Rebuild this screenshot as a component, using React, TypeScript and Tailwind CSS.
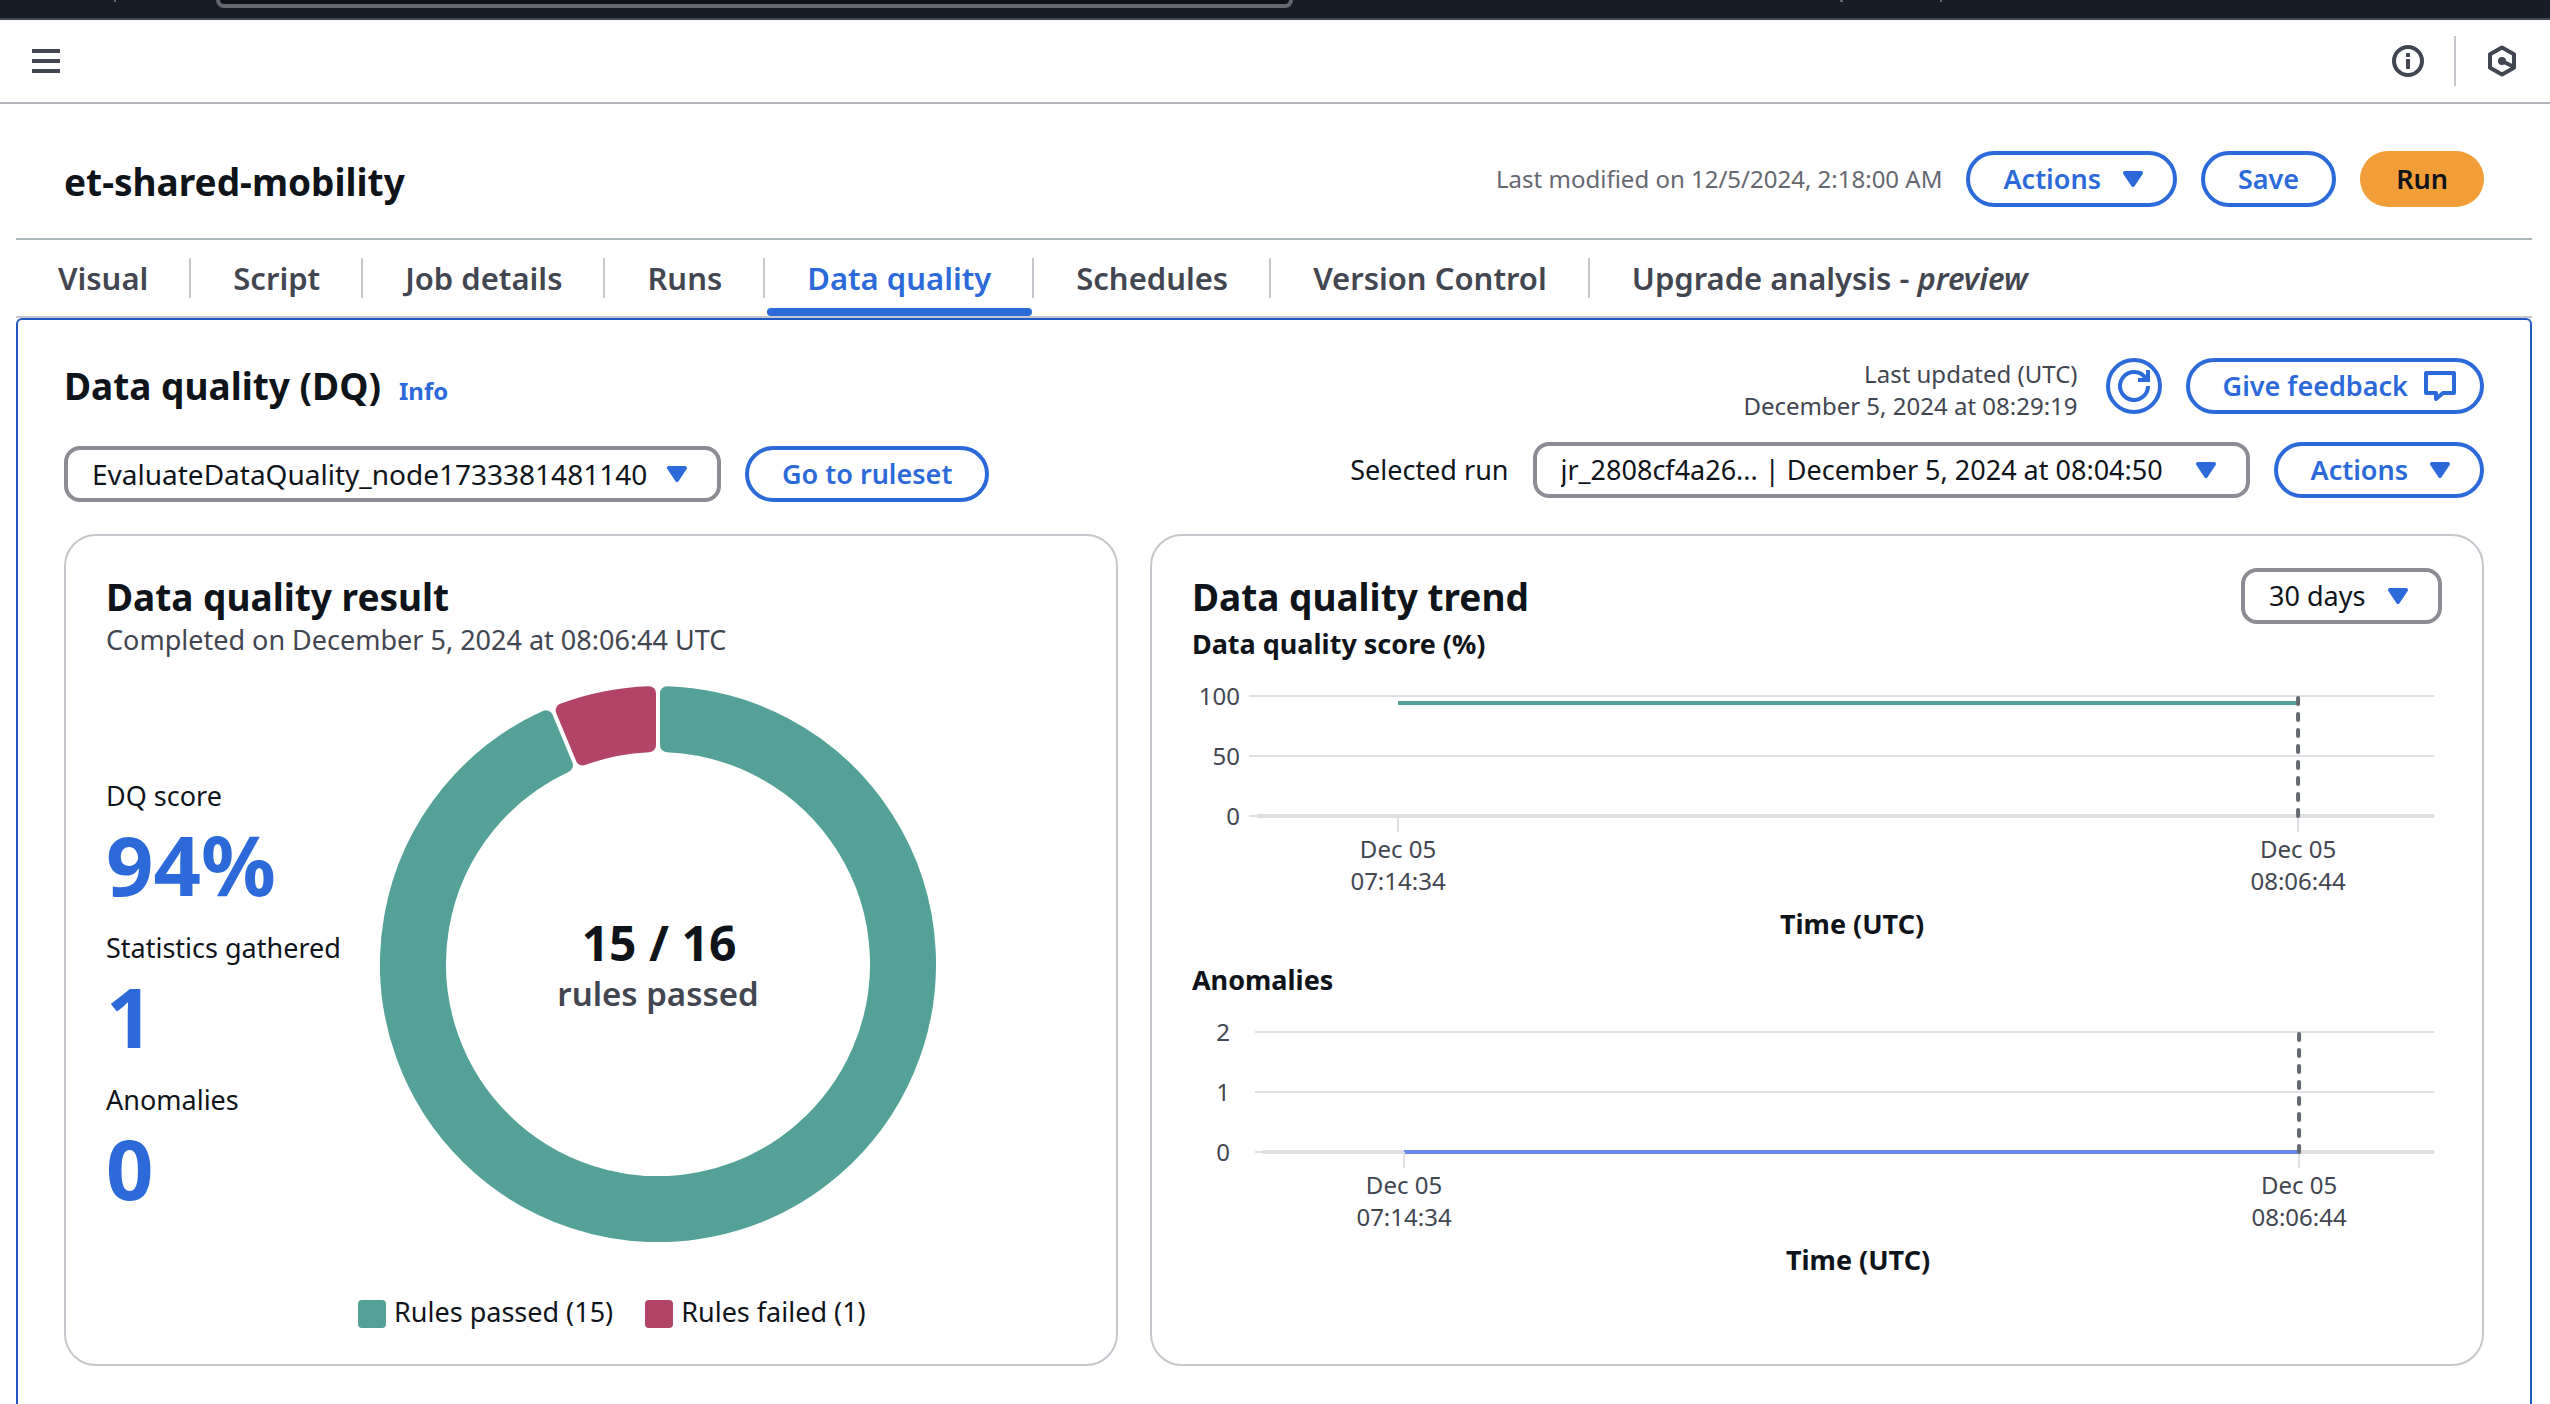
import React from "react";

const TEAL = "#54a297";
const RED = "#b14467";

function Triangle({ className = "" }: { className?: string }) {
  return (
    <svg aria-hidden="true" viewBox="0 0 20 16" className={`h-4 w-5 shrink-0 ${className}`}>
      <path d="M2 2h16l-8 12z" fill="#2c6ad9" stroke="#2c6ad9" strokeWidth="4" strokeLinejoin="round" />
    </svg>
  );
}

function PillButton({ children, className = "" }: { children: React.ReactNode; className?: string }) {
  return (
    <button
      type="button"
      className={`flex h-14 shrink-0 items-center justify-center whitespace-nowrap rounded-full border-4 border-[#2c6ad9] pl-[33px] text-[27px] font-semibold text-[#2c6ad9] ${className}`}
    >
      {children}
    </button>
  );
}

function ActionsButton() {
  return (
    <PillButton className="gap-[22px] pr-[30px]">
      Actions
      <Triangle />
    </PillButton>
  );
}

function Dropdown({ label, value, className }: { label: string; value: string; className: string }) {
  return (
    <div className="relative shrink-0">
      <select
        aria-label={label}
        defaultValue={value}
        className={`block h-14 appearance-none rounded-2xl border-4 border-[#8c8c94] bg-white pl-6 text-[#0f141a] ${className}`}
      >
        <option>{value}</option>
      </select>
      <Triangle className="pointer-events-none absolute right-[34px] top-5" />
    </div>
  );
}

const tabs = ["Visual", "Script", "Job details", "Runs", "Data quality", "Schedules", "Version Control"];

function Tabs() {
  return (
    <nav role="tablist" aria-label="Job sections" className="flex h-[76px] text-[31px] font-semibold text-[#424650]">
      {tabs.map((t) => (
        <div key={t} className="flex flex-col">
          <div className="mt-[18px] flex h-10 items-center border-r-2 border-[#c6c6cd]">
            <button
              type="button"
              role="tab"
              aria-selected={t === "Data quality"}
              className={`whitespace-nowrap pl-[42px] pr-[41px] ${t === "Data quality" ? "text-[#2c6ad9]" : ""}`}
            >
              {t}
            </button>
          </div>
          {t === "Data quality" && <div className="ml-0.5 mr-0.5 mt-auto h-2 rounded bg-[#2c6ad9]" />}
        </div>
      ))}
      <div className="mt-[18px] flex h-10 items-center">
        <button type="button" role="tab" aria-selected={false} className="whitespace-nowrap px-[42px]">
          Upgrade analysis - <em>preview</em>
        </button>
      </div>
    </nav>
  );
}

function ringSegment(start: number, end: number) {
  const outer = 271;
  const inner = 219;
  const inset = 9;
  const point = (r: number, a: number) => `${278 + r * Math.sin(a)} ${278 - r * Math.cos(a)}`;
  const o = Math.asin(inset / outer);
  const i = Math.asin(inset / inner);
  const large = end - start > Math.PI ? 1 : 0;
  return [
    `M${point(outer, start + o)}`,
    `A${outer} ${outer} 0 ${large} 1 ${point(outer, end - o)}`,
    `L${point(inner, end - i)}`,
    `A${inner} ${inner} 0 ${large} 0 ${point(inner, start + i)}Z`,
  ].join("");
}

function Donut() {
  const split = (Math.PI * 2 * 15) / 16;
  return (
    <svg viewBox="0 0 556 556" role="img" aria-label="15 of 16 rules passed" className="h-auto w-[556px]">
      <path d={ringSegment(0, split)} fill={TEAL} stroke={TEAL} strokeWidth="14" strokeLinejoin="round" />
      <path d={ringSegment(split, Math.PI * 2)} fill={RED} stroke={RED} strokeWidth="14" strokeLinejoin="round" />
      <text x="279" y="275" textAnchor="middle" className="fill-[#0f141a] text-[48px] font-bold">
        15 / 16
      </text>
      <text x="278" y="320" textAnchor="middle" className="fill-[#424650] text-[33px] font-semibold">
        rules passed
      </text>
    </svg>
  );
}

type ChartProps = {
  label: string;
  ticks: string[];
  left: number;
  start: number;
  end: number;
  level: number;
  color: string;
  labelRight: number;
  ticksOverLine?: boolean;
};

function TrendChart({ label, ticks, left, start, end, level, color, labelRight, ticksOverLine }: ChartProps) {
  const series = <path d={`M${start} ${level}H${end}`} stroke={color} strokeWidth="4" />;
  const marks = (
    <g stroke="#dedee3" strokeWidth="2">
      <path d={`M${start} 152V168`} />
      <path d={`M${end} 152V168`} />
    </g>
  );
  return (
    <svg viewBox="0 0 1250 296" role="img" aria-label={label} className="block h-auto w-full text-[24px]">
      {ticks.map((t, n) => (
        <g key={t}>
          <path d={`M${left} ${32 + n * 60}H1242`} stroke="#dedee3" strokeWidth="2" />
          <text x={labelRight} y={41 + n * 60} textAnchor="end" className="fill-[#424650]">
            {t}
          </text>
        </g>
      ))}
      <path d={`M${left + 8} 152H1242`} stroke="#dedee3" strokeWidth="4" />
      {!ticksOverLine && marks}
      {series}
      {ticksOverLine && marks}
      <path d={`M${end} 34V152`} stroke="#656871" strokeWidth="4" strokeLinecap="round" strokeDasharray="6 10" />
      <g textAnchor="middle" className="fill-[#424650]">
        <text x={start} y="194">Dec 05</text>
        <text x={start} y="226">07:14:34</text>
        <text x={end} y="194">Dec 05</text>
        <text x={end} y="226">08:06:44</text>
      </g>
      <text x={start + 454} y="270" textAnchor="middle" className="fill-[#0f141a] text-[27px] font-bold">
        Time (UTC)
      </text>
    </svg>
  );
}

const metrics = [
  ["DQ score", "94%"],
  ["Statistics gathered", "1"],
  ["Anomalies", "0"],
];

export default function App() {
  return (
    <div className="flex min-h-screen flex-col bg-white font-['Noto_Sans',sans-serif] text-[27px] leading-10 text-[#0f141a]">
      <div className="flex h-5 items-start border-b-2 border-[#424650] bg-[#161d26]">
        <div className="ml-[114px] h-0.5 w-0.5 bg-[#656871]" />
        <input
          type="search"
          aria-label="Search"
          className="ml-[100px] h-2 w-[1077px] rounded-b-2xl border-4 border-t-0 border-[#656871] bg-[#0f141a]"
        />
        <div className="ml-[547px] h-0.5 w-[3px] bg-[#656871]" />
        <div className="ml-[97px] h-0.5 w-0.5 bg-[#656871]" />
      </div>

      <header className="flex h-[84px] items-center justify-between border-b-2 border-[#b4b4bb] px-8">
        <button type="button" aria-label="Open navigation">
          <svg viewBox="0 0 28 24" className="h-6 w-7">
            <path d="M0 2h28M0 12h28M0 22h28" stroke="#424650" strokeWidth="4" />
          </svg>
        </button>
        <div className="flex items-center gap-[30px]">
          <button type="button" aria-label="Information">
            <svg viewBox="0 0 32 32" fill="none" className="size-8">
              <circle cx="16" cy="16" r="14" stroke="#424650" strokeWidth="4" />
              <path d="M16 8v4M16 14v10" stroke="#424650" strokeWidth="4" />
            </svg>
          </button>
          <div className="h-[50px] w-0.5 bg-[#c6c6cd]" />
          <button type="button" aria-label="Amazon Q">
            <svg viewBox="0 0 32 32" fill="none" className="size-8">
              <path
                d="M16 2.5 28 9.2v13.6L16 29.5 4 22.8V9.2z"
                stroke="#424650"
                strokeWidth="4"
                strokeLinejoin="round"
              />
              <circle cx="16" cy="16" r="4" fill="#424650" />
              <path d="M16 16l12 6" stroke="#424650" strokeWidth="4" />
            </svg>
          </button>
        </div>
      </header>

      <main className="ml-4 mr-[18px] flex grow flex-col">
        <div className="flex items-center justify-between border-b-2 border-[#aab7b8] pb-[31px] pl-12 pr-12 pt-[47px]">
          <h1 className="pt-1.5 text-[37px] font-bold leading-[50px]">et-shared-mobility</h1>
          <div className="flex items-center gap-6">
            <p className="text-[24px] leading-8 text-[#656871]">Last modified on 12/5/2024, 2:18:00 AM</p>
            <ActionsButton />
            <PillButton className="pr-[33px]">Save</PillButton>
            <button
              type="button"
              className="h-14 rounded-full bg-[#f19e39] px-9 text-[27px] font-semibold text-[#0f141a]"
            >
              Run
            </button>
          </div>
        </div>

        <Tabs />

        <section className="grow border-t-2 border-[#c6c6cd]">
          <div className="h-full rounded-t-md border-x-2 border-t-2 border-[#2159c2] pb-[38px] pl-[46px] pr-[46px] pt-[38px]">
            <div className="flex items-start justify-between">
              <div>
                <div className="flex h-14 items-baseline gap-[18px]">
                  <h2 className="text-[37px] font-bold leading-[56px]">Data quality (DQ)</h2>
                  <a href="#info" className="text-[24px] font-bold text-[#2c6ad9]">
                    Info
                  </a>
                </div>
                <div className="mt-8 flex gap-6">
                  <Dropdown
                    label="Evaluation node"
                    value="EvaluateDataQuality_node1733381481140"
                    className="w-[657px] text-[28px]"
                  />
                  <PillButton className="pr-[33px]">Go to ruleset</PillButton>
                </div>
              </div>
              <div className="flex flex-col items-end">
                <div className="flex items-start gap-6">
                  <p className="pr-1 text-right text-[24px] leading-8 text-[#424650]">
                    Last updated (UTC)
                    <br />
                    December 5, 2024 at 08:29:19
                  </p>
                  <button
                    type="button"
                    aria-label="Refresh"
                    className="flex size-14 items-center justify-center rounded-full border-4 border-[#2c6ad9]"
                  >
                    <svg viewBox="0 0 32 32" fill="none" stroke="#2c6ad9" strokeWidth="4" className="size-8">
                      <path d="M30 16A14 14 0 1 1 27.5 8" />
                      <path d="M30 0v10H20" />
                    </svg>
                  </button>
                  <PillButton className="gap-4 pr-6">
                    Give feedback
                    <svg
                      viewBox="0 0 32 32"
                      fill="none"
                      stroke="#2c6ad9"
                      strokeWidth="4"
                      strokeLinejoin="round"
                      className="size-8"
                    >
                      <path d="M2 3h28v20H19l-7 6v-6H2z" />
                    </svg>
                  </PillButton>
                </div>
                <div className="mt-5 flex items-center gap-6">
                  <span>Selected run</span>
                  <Dropdown
                    label="Selected run"
                    value="jr_2808cf4a26... | December 5, 2024 at 08:04:50"
                    className="w-[717px] text-[27px]"
                  />
                  <ActionsButton />
                </div>
              </div>
            </div>

            <div className="mt-8 grid grid-cols-[79fr_100fr] gap-8">
              <article className="rounded-[32px] border-2 border-[#c6c6cd] px-10 pb-8 pt-10">
                <h3 className="text-[37px] font-bold leading-[42px]">Data quality result</h3>
                <p className="pt-0.5 text-[#424650]">Completed on December 5, 2024 at 08:06:44 UTC</p>
                <div className="mt-[26px] flex gap-6">
                  <dl className="flex w-[250px] shrink-0 flex-col gap-4 pt-[90px]">
                    {metrics.map(([name, value]) => (
                      <div key={name}>
                        <dt className="whitespace-nowrap">{name}</dt>
                        <dd className="text-[83px] font-bold leading-[96px] text-[#2c6ad9]">{value}</dd>
                      </div>
                    ))}
                  </dl>
                  <Donut />
                </div>
                <ul className="mt-[50px] flex gap-8 pl-[252px]">
                  <li className="flex items-center gap-2">
                    <span className="mt-1 size-7 rounded bg-[#54a297]" />
                    Rules passed (15)
                  </li>
                  <li className="flex items-center gap-2">
                    <span className="mt-1 size-7 rounded bg-[#b14467]" />
                    Rules failed (1)
                  </li>
                </ul>
              </article>

              <article className="rounded-[32px] border-2 border-[#c6c6cd] px-10 pb-8 pt-8">
                <div className="flex items-start justify-between">
                  <h3 className="pt-2 text-[37px] font-bold leading-[42px]">Data quality trend</h3>
                  <Dropdown label="Time range" value="30 days" className="w-[201px] text-[27px]" />
                </div>
                <h4 className="font-bold">Data quality score (%)</h4>
                <TrendChart
                  label="Data quality score over time"
                  ticks={["100", "50", "0"]}
                  left={57}
                  start={206}
                  end={1106}
                  level={39}
                  color={TEAL}
                  labelRight={48}
                />
                <h4 className="font-bold">Anomalies</h4>
                <TrendChart
                  label="Anomalies over time"
                  ticks={["2", "1", "0"]}
                  left={63}
                  start={212}
                  end={1107}
                  level={152}
                  color="#688ae8"
                  labelRight={38}
                  ticksOverLine
                />
              </article>
            </div>
          </div>
        </section>
      </main>
    </div>
  );
}
